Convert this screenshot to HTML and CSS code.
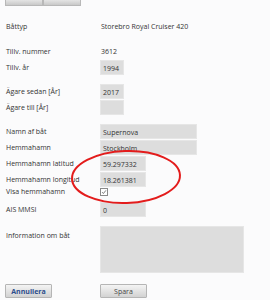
FILE: index.html
```html
<!DOCTYPE html>
<html lang="sv">
<head>
    <meta charset="UTF-8">
    <title>Båt</title>
    <link rel="stylesheet" href="styles.css">
</head>
<body>
    <!-- Top tabs (cut off) -->
    <div class="topbar">
        <span class="tab"></span>
        <span class="tab"></span>
    </div>

    <!-- Boat form -->
    <form class="boat-form">
        <div class="row gap-top-1">
            <span class="label">Båttyp</span>
            <span class="value">Storebro Royal Cruiser 420</span>
        </div>

        <div class="row gap-top-2">
            <span class="label">Tillv. nummer</span>
            <span class="value">3612</span>
        </div>
        <div class="row gap-1">
            <span class="label">Tillv. år</span>
            <span class="field small">1994</span>
        </div>

        <div class="row gap-top-3">
            <span class="label">Ägare sedan [År]</span>
            <span class="field small">2017</span>
        </div>
        <div class="row gap-1">
            <span class="label">Ägare till [År]</span>
            <span class="field small"></span>
        </div>

        <div class="row gap-top-3">
            <span class="label">Namn af båt</span>
            <span class="field wide">Supernova</span>
        </div>
        <div class="row gap-1">
            <span class="label">Hemmahamn</span>
            <span class="field wide">Stockholm</span>
        </div>
        <div class="row gap-1">
            <span class="label">Hemmahamn latitud</span>
            <span class="field medium">59.297332</span>
        </div>
        <div class="row gap-1">
            <span class="label">Hemmahamn longitud</span>
            <span class="field medium">18.261381</span>
        </div>
        <div class="row check-row">
            <span class="label">Visa hemmahamn</span>
            <span class="checkbox">
                <svg width="8" height="8" viewBox="0 0 8 8"><path d="M1.5 4.2 L3.2 6 L6.6 1.8" fill="none" stroke="#555" stroke-width="1"/></svg>
            </span>
        </div>

        <div class="row gap-top-4">
            <span class="label">AIS MMSI</span>
            <span class="field medium">0</span>
        </div>

        <div class="row text-row">
            <span class="label">Information om båt</span>
            <span class="field area"></span>
        </div>

        <div class="buttons">
            <button type="button" class="btn cancel">Annullera</button>
            <button type="button" class="btn save">Spara</button>
        </div>

        <!-- Red marker drawn over the coordinates -->
        <svg class="marker" width="120" height="64" viewBox="0 0 120 64">
            <ellipse cx="60" cy="32" rx="54" ry="26" fill="none" stroke="#e31c1c" stroke-width="2" transform="rotate(-2 60 32)"/>
        </svg>
    </form>
</body>
</html>
```

FILE: styles.css
```css
body {
    margin: 0;
    background-color: #fbfbfc;
    font-family: "Open Sans", "DejaVu Sans", sans-serif;
    font-size: 7px;
    color: #333;
}

.topbar {
    display: flex;
    padding-left: 5px;
    height: 6px;
}

.tab {
    width: 36px;
    height: 5px;
    background: linear-gradient(#e4e4e4, #c9c9c9);
    border: 1px solid #b8b8b8;
    border-top: none;
}

.boat-form {
    position: relative;
    padding-left: 6px;
}

.row {
    display: flex;
    align-items: center;
    height: 15px;
}

.gap-top-1 { margin-top: 13px; }
.gap-top-2 { margin-top: 10px; }
.gap-top-3 { margin-top: 9px; }
.gap-top-4 { margin-top: 6px; }
.gap-1 { margin-top: 1px; }

.label {
    width: 94px;
    flex-shrink: 0;
}

.value {
    padding-left: 1px;
}

.field {
    box-sizing: border-box;
    height: 15px;
    line-height: 15px;
    padding-left: 2px;
    background-color: #dddddd;
    border: 1px solid #e6e6e6;
    color: #333;
}

.small { width: 24px; }
.medium { width: 46px; }
.wide { width: 97px; }

.check-row {
    height: 9px;
}

.checkbox {
    box-sizing: border-box;
    width: 8px;
    height: 8px;
    border: 1px solid #8a8a8a;
    background: #fff;
    display: flex;
    align-items: center;
    justify-content: center;
}

.checkbox svg {
    width: 6px;
    height: 6px;
}

.text-row {
    margin-top: 9px;
    height: 47px;
    align-items: flex-start;
}

.text-row .label {
    padding-top: 5px;
}

.area {
    width: 144px;
    height: 47px;
}

.buttons {
    display: flex;
    margin-top: 11px;
    margin-left: -1px;
}

.btn {
    box-sizing: border-box;
    width: 47px;
    height: 14px;
    padding: 0;
    font-family: "Open Sans", "DejaVu Sans", sans-serif;
    font-size: 7px;
    background: linear-gradient(#f4f4f4, #d2d2d2);
    border: 1px solid #b5b5b5;
    border-radius: 1px;
}

.cancel {
    color: #2b4c8c;
    font-weight: bold;
}

.save {
    margin-left: 48px;
    color: #444;
}

.marker {
    position: absolute;
    left: 66px;
    top: 126px;
}
```
